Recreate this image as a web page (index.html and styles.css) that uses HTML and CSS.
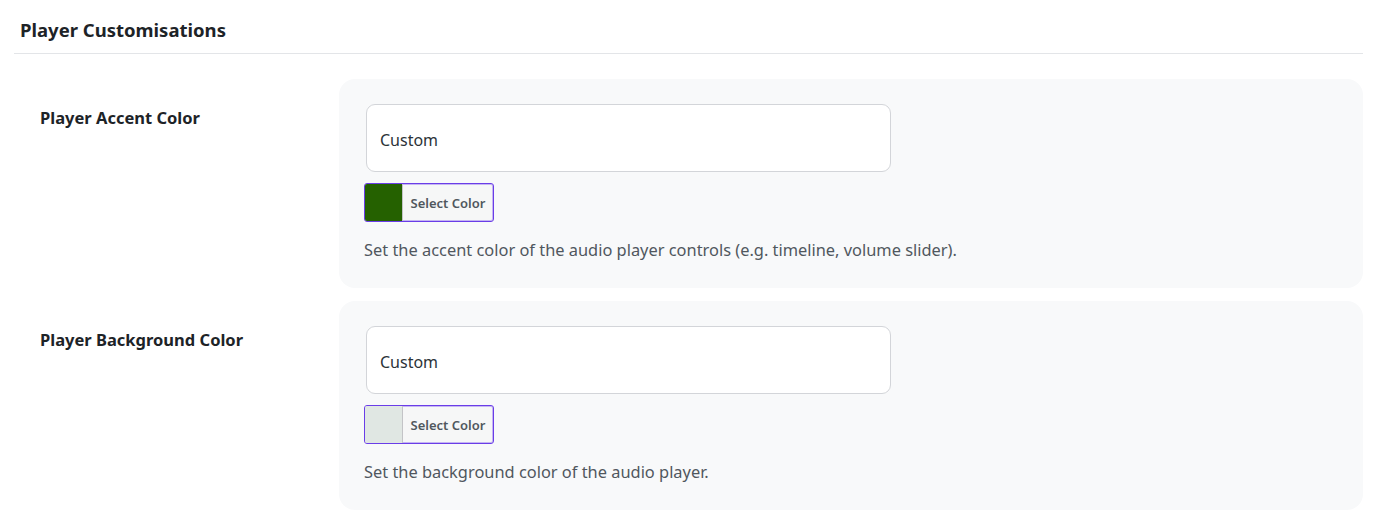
FILE: index.html
```html
<!DOCTYPE html>
<html lang="en">
<head>
<meta charset="utf-8">
<title>Player Customisations</title>
<link rel="stylesheet" href="styles.css">
</head>
<body>
<div class="page">
  <h2 class="section-title">Player Customisations</h2>
  <div class="divider"></div>
  <div class="settings">
    <div class="row">
      <div class="label">Player Accent Color</div>
      <div class="card">
        <div class="select">Custom</div>
        <div class="color-btn" role="button"><span class="swatch swatch-green"></span><span class="btn-text">Select Color</span></div>
        <p class="desc">Set the accent color of the audio player controls (e.g. timeline, volume slider).</p>
      </div>
    </div>
    <div class="row">
      <div class="label">Player Background Color</div>
      <div class="card">
        <div class="select">Custom</div>
        <div class="color-btn" role="button"><span class="swatch swatch-light"></span><span class="btn-text">Select Color</span></div>
        <p class="desc">Set the background color of the audio player.</p>
      </div>
    </div>
  </div>
</div>
</body>
</html>
```
FILE: styles.css
```css
* { box-sizing: border-box; }
body {
  margin: 0;
  background: #ffffff;
  font-family: "Noto Sans", "Open Sans", sans-serif;
  color: #1d2327;
}
.page {
  padding: 0 16px 0 14px;
}
.section-title {
  margin: 0;
  padding: 18px 0 0 6px;
  height: 53px;
  font-size: 18.5px;
  line-height: 24px;
  font-weight: 700;
  color: #1d2327;
}
.divider {
  height: 1px;
  background: #e3e5e8;
}
.settings {
  display: flex;
  flex-direction: column;
  gap: 13px;
  padding-top: 25px;
}
.row {
  display: grid;
  grid-template-columns: 325px 1fr;
}
.label {
  padding: 27px 0 0 26px;
  font-size: 16.5px;
  line-height: 24px;
  font-weight: 700;
  color: #1d2327;
}
.card {
  background: #f8f9fa;
  border-radius: 16px;
  height: 209px;
  padding: 25px 25px 0 25px;
}
.select {
  width: 525px;
  height: 68px;
  margin-left: 2px;
  background: #ffffff;
  border: 1px solid #d3d5d9;
  border-radius: 9px;
  padding: 3px 13px 0 13px;
  display: flex;
  align-items: center;
  font-size: 16px;
  color: #2c3338;
}
.color-btn {
  margin-top: 11px;
  display: flex;
  align-items: stretch;
  height: 39px;
  width: 130px;
  border: 1px solid #6a3de8;
  border-radius: 3px;
  background: #f6f7f7;
  box-shadow: inset 0 0 0 1px rgba(106, 61, 232, 0.35);
  cursor: pointer;
}
.swatch {
  width: 38px;
  border-right: 1px solid #c3c4c7;
  border-radius: 2px 0 0 2px;
}
.swatch-green { background: #256100; }
.swatch-light { background: #e0e7e3; }
.btn-text {
  flex: 1;
  display: flex;
  align-items: center;
  justify-content: center;
  padding-top: 1px;
  font-size: 13px;
  font-weight: 600;
  color: #50575e;
}
.desc {
  margin: 16px 0 0 0;
  font-size: 16.4px;
  line-height: 24px;
  color: #50575e;
}
```
